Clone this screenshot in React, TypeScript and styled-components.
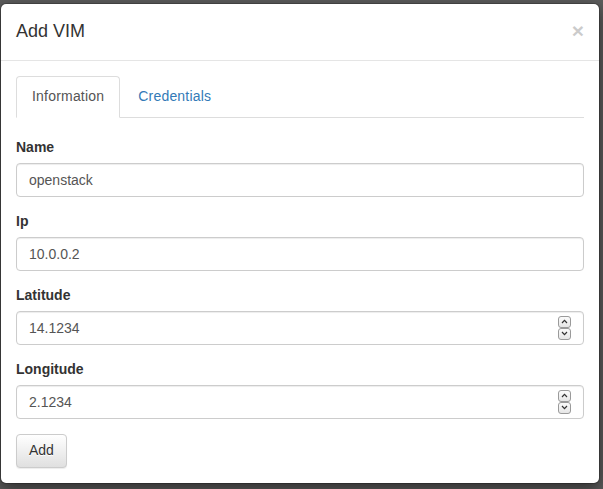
import React from "react";
import styled, { createGlobalStyle } from "styled-components";

const Global = createGlobalStyle`
  html, body { margin: 0; padding: 0; }
  body {
    background: #5d5d5d;
    font-family: "Liberation Sans", Arial, Helvetica, sans-serif;
    font-size: 14px;
    line-height: 1.42857;
    color: #333;
    width: 603px;
    height: 489px;
    overflow: hidden;
  }
  * { box-sizing: border-box; }
`;

const Stage = styled.div`
  padding-top: 3px;
  width: 603px;
  height: 489px;
`;

const Modal = styled.div`
  width: 600px;
  background: #fff;
  border: 1px solid rgba(0, 0, 0, 0.2);
  border-radius: 6px;
  box-shadow: 0 5px 15px rgba(0, 0, 0, 0.5);
  background-clip: padding-box;
`;

const Header = styled.div`
  display: flex;
  justify-content: space-between;
  align-items: flex-start;
  padding: 15px;
  border-bottom: 1px solid #e5e5e5;
`;

const Title = styled.h4`
  margin: 0;
  font-size: 18px;
  font-weight: 500;
  line-height: 1.42857;
  color: #333;
`;

const Close = styled.button`
  margin-top: 1px;
  padding: 0;
  border: 0;
  background: transparent;
  font-family: "Liberation Sans", Arial, sans-serif;
  font-size: 21px;
  font-weight: 700;
  line-height: 1;
  color: #000;
  text-shadow: 0 1px 0 #fff;
  opacity: 0.2;
  cursor: pointer;
`;

const Body = styled.div`
  padding: 15px;
`;

const Tabs = styled.ul`
  display: flex;
  margin: 0;
  padding: 0;
  list-style: none;
  border-bottom: 1px solid #ddd;
`;

const TabItem = styled.li`
  margin-right: 2px;
  margin-bottom: -1px;
`;

const TabLink = styled.a<{ $active?: boolean }>`
  display: block;
  padding: 10px 15px;
  line-height: 1.42857;
  letter-spacing: 0.2px;
  border: 1px solid ${(p) => (p.$active ? "#ddd" : "transparent")};
  border-bottom-color: ${(p) => (p.$active ? "#fff" : "transparent")};
  border-radius: 4px 4px 0 0;
  background: ${(p) => (p.$active ? "#fff" : "transparent")};
  color: ${(p) => (p.$active ? "#555" : "#337ab7")};
  text-decoration: none;
  cursor: pointer;
`;

const Pane = styled.div`
  padding-top: 20px;
`;

const Group = styled.div`
  margin-bottom: 15px;
`;

const Label = styled.label`
  display: block;
  margin-bottom: 5px;
  font-weight: 700;
  color: #333;
`;

const Field = styled.div`
  display: flex;
  align-items: center;
  height: 34px;
  padding: 0 12px;
  border: 1px solid #ccc;
  border-radius: 4px;
  background: #fff;
  box-shadow: inset 0 1px 1px rgba(0, 0, 0, 0.075);
`;

const Input = styled.input`
  flex: 1;
  min-width: 0;
  height: 100%;
  padding: 0;
  border: 0;
  outline: none;
  background: transparent;
  font-family: "Liberation Sans", Arial, sans-serif;
  font-size: 14px;
  color: #555;
`;

const Spinner = styled.div`
  display: flex;
  flex-direction: column;
  width: 13px;
`;

const SpinBox = styled.div`
  display: flex;
  align-items: center;
  justify-content: center;
  height: 12px;
  border: 1px solid #9a9a9a;
  border-radius: 3px;
  background: linear-gradient(to bottom, #fbfbfb, #e6e6e6);
`;

const Button = styled.button`
  display: inline-block;
  padding: 6px 12px;
  font-family: "Liberation Sans", Arial, sans-serif;
  font-size: 14px;
  line-height: 1.42857;
  color: #333;
  border: 1px solid #ccc;
  border-radius: 4px;
  background-image: linear-gradient(to bottom, #fff 0, #e0e0e0 100%);
  text-shadow: 0 1px 0 #fff;
  box-shadow: inset 0 1px 0 rgba(255, 255, 255, 0.15), 0 1px 1px rgba(0, 0, 0, 0.075);
  cursor: pointer;
`;

const Chevron = ({ up }: { up?: boolean }) => (
  <svg width="7" height="5" viewBox="0 0 7 5">
    <path
      d={up ? "M1 4 L3.5 1.3 L6 4" : "M1 1 L3.5 3.7 L6 1"}
      fill="none"
      stroke="#333"
      strokeWidth="1.2"
    />
  </svg>
);

const TextField = ({ value }: { value: string }) => (
  <Field>
    <Input type="text" defaultValue={value} />
  </Field>
);

const NumberField = ({ value }: { value: string }) => (
  <Field>
    <Input type="text" inputMode="decimal" defaultValue={value} />
    <Spinner>
      <SpinBox>
        <Chevron up />
      </SpinBox>
      <SpinBox>
        <Chevron />
      </SpinBox>
    </Spinner>
  </Field>
);

export default function App() {
  return (
    <>
      <Global />
      <Stage>
        <Modal>
          <Header>
            <Title>Add VIM</Title>
            <Close aria-label="Close">×</Close>
          </Header>
          <Body>
            <Tabs>
              <TabItem>
                <TabLink $active>Information</TabLink>
              </TabItem>
              <TabItem>
                <TabLink>Credentials</TabLink>
              </TabItem>
            </Tabs>
            <Pane>
              <Group>
                <Label>Name</Label>
                <TextField value="openstack" />
              </Group>
              <Group>
                <Label>Ip</Label>
                <TextField value="10.0.0.2" />
              </Group>
              <Group>
                <Label>Latitude</Label>
                <NumberField value="14.1234" />
              </Group>
              <Group>
                <Label>Longitude</Label>
                <NumberField value="2.1234" />
              </Group>
              <Button>Add</Button>
            </Pane>
          </Body>
        </Modal>
      </Stage>
    </>
  );
}
